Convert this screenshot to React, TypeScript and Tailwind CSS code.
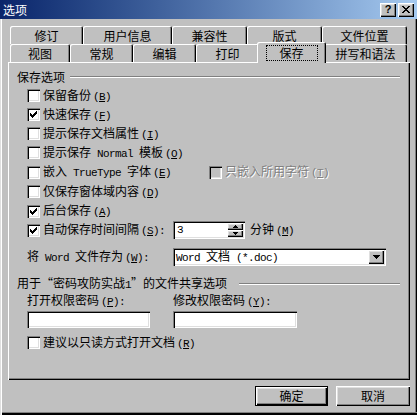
import React from 'react';

type Kids = { children?: React.ReactNode };

// Latin runs: narrow mono so they sit at SimSun's half-width
const L = ({ children }: Kids) => (
  <span className="font-['Liberation_Mono',monospace] text-[11px] tracking-[-0.6px] whitespace-pre">{children}</span>
);

const K = ({ k, colon }: { k: string; colon?: boolean }) => (
  <span className="ml-[2px]">
    <L>
      (<u>{k}</u>){colon ? ':' : ''}
    </L>
  </span>
);

const CheckMark = () => (
  <svg width="7" height="7" viewBox="0 0 7 7" shapeRendering="crispEdges">
    <rect x="6" y="0" width="1" height="1" fill="#000" />
    <rect x="5" y="1" width="2" height="1" fill="#000" />
    <rect x="0" y="2" width="1" height="1" fill="#000" />
    <rect x="4" y="2" width="3" height="1" fill="#000" />
    <rect x="0" y="3" width="2" height="1" fill="#000" />
    <rect x="3" y="3" width="3" height="1" fill="#000" />
    <rect x="0" y="4" width="5" height="1" fill="#000" />
    <rect x="1" y="5" width="3" height="1" fill="#000" />
    <rect x="2" y="6" width="1" height="1" fill="#000" />
  </svg>
);

const Box = ({ checked, disabled }: { checked?: boolean; disabled?: boolean }) => (
  <span
    className={`w-[13px] h-[13px] shrink-0 flex items-center justify-center shadow-[inset_1px_1px_#808080,inset_2px_2px_#000,inset_-1px_-1px_#fff,inset_-2px_-2px_#dfdfdf] ${
      disabled ? 'bg-[#c0c0c0]' : 'bg-white'
    }`}
  >
    {checked && <CheckMark />}
  </span>
);

const Check = ({ h, checked, children }: Kids & { h: string; checked?: boolean }) => (
  <div className={`flex items-center ${h}`}>
    <div className="flex items-center gap-[3px]">
      <Box checked={checked} />
      <span>{children}</span>
    </div>
  </div>
);

const Groove = ({ className }: { className: string }) => (
  <div className={`h-[2px] border-t border-t-[#808080] border-b border-b-white ${className}`} />
);

const raised = 'bg-[#c0c0c0] shadow-[inset_1px_1px_#fff,inset_-1px_-1px_#000,inset_-2px_-2px_#808080,inset_2px_2px_#dfdfdf]';
const sunken = 'bg-white shadow-[inset_1px_1px_#808080,inset_2px_2px_#000,inset_-1px_-1px_#fff,inset_-2px_-2px_#dfdfdf]';

const Tab = ({ label, w }: { label: string; w: string }) => (
  <div
    className={`${w} h-[18px] flex items-center justify-center pt-[1px] rounded-t-[2px] shadow-[inset_1px_1px_#fff,inset_-1px_0_#000,inset_-2px_0_#808080]`}
  >
    {label}
  </div>
);

const Tri = ({ up, w, h }: { up?: boolean; w: number; h: number }) => (
  <svg width={w} height={h} viewBox={`0 0 ${w} ${h}`} shapeRendering="crispEdges">
    <polygon points={up ? `${w / 2},0 ${w},${h} 0,${h}` : `0,0 ${w},0 ${w / 2},${h}`} fill="#000" />
  </svg>
);

export default function App() {
  return (
    <div className="w-[417px] h-[415px] bg-[#c0c0c0] flex flex-col font-['Noto_Sans_CJK_SC',sans-serif] text-[12px] leading-[14px] text-black overflow-hidden">
      {/* title bar */}
      <div className="h-[19px] shrink-0 flex items-center bg-linear-to-r from-[#0a246a] to-[#a6caf0] pl-[3px] pr-[3px]">
        <span className="flex-1 text-white">选项</span>
        <div className={`w-[16px] h-[14px] flex items-center justify-center ${raised}`}>
          <span className="font-['Liberation_Sans',sans-serif] font-bold text-[11px] leading-none">?</span>
        </div>
        <div className={`w-[16px] h-[14px] ml-[2px] flex items-center justify-center ${raised}`}>
          <svg width="8" height="7" viewBox="0 0 8 7" shapeRendering="crispEdges">
            <path d="M0 0h2l2 2.2L6 0h2L5 3.5 8 7H6L4 4.8 2 7H0l3-3.5z" fill="#000" />
          </svg>
        </div>
      </div>

      {/* window body */}
      <div className="flex-1 flex flex-col pt-[7px] shadow-[inset_1px_0_#dfdfdf,inset_2px_0_#fff,inset_0_-2px_#000,inset_0_-3px_#808080,inset_-1px_0_#000,inset_-2px_0_#808080]">
        {/* tabs */}
        <div className="flex h-[18px] ml-[10px]">
          <Tab label="修订" w="w-[73px]" />
          <Tab label="用户信息" w="w-[89px]" />
          <Tab label="兼容性" w="w-[75px]" />
          <Tab label="版式" w="w-[75px]" />
          <Tab label="文件位置" w="w-[85px]" />
        </div>
        <div className="flex h-[18px] ml-[10px]">
          <Tab label="视图" w="w-[60px]" />
          <Tab label="常规" w="w-[63px]" />
          <Tab label="编辑" w="w-[63px]" />
          <Tab label="打印" w="w-[63px]" />
          <div className="relative z-10 w-[69px] h-[21px] -mx-[2px] -mt-[2px] bg-[#c0c0c0] rounded-t-[2px] flex items-center justify-center shadow-[inset_1px_1px_#fff,inset_-1px_0_#000,inset_-2px_0_#808080]">
            <div className="w-[52px] h-[16px] border border-dotted border-black flex items-center justify-center">保存</div>
          </div>
          <Tab label="拼写和语法" w="w-[83px]" />
        </div>

        {/* panel */}
        <div className="ml-[8px] w-[402px] h-[318px] flex flex-col pl-[9px] pr-[10px] pt-[8px] shadow-[inset_1px_1px_#fff,inset_-1px_-1px_#000,inset_-2px_-2px_#808080]">
          <div className="flex items-center h-[14px]">
            <span>保存选项</span>
            <Groove className="flex-1 ml-[5px]" />
          </div>

          <div className="flex flex-col ml-[10px] mt-[2px]">
            <Check h="h-[19px]">
              保留备份<K k="B" />
            </Check>
            <Check h="h-[19px]" checked>
              快速保存<K k="F" />
            </Check>
            <Check h="h-[19px]">
              提示保存文档属性<K k="I" />
            </Check>
            <Check h="h-[19px]">
              提示保存<L>{' Normal '}</L>模板<K k="O" />
            </Check>
            <div className="flex items-center h-[20px]">
              <div className="w-[182px] flex items-center gap-[3px]">
                <Box />
                <span>
                  嵌入<L>{' TrueType '}</L>字体<K k="E" />
                </span>
              </div>
              <div className="flex items-center gap-[3px] text-[#808080] [text-shadow:1px_1px_#fff]">
                <Box disabled />
                <span>
                  只嵌入所用字符<K k="T" />
                </span>
              </div>
            </div>
            <Check h="h-[19px]">
              仅保存窗体域内容<K k="D" />
            </Check>
            <Check h="h-[20px]" checked>
              后台保存<K k="A" />
            </Check>
            <div className="flex items-center h-[18px]">
              <div className="w-[146px] flex items-center gap-[3px]">
                <Box checked />
                <span>
                  自动保存时间间隔<K k="S" colon />
                </span>
              </div>
              <div className={`w-[72px] h-[18px] flex items-center pl-[4px] pr-[2px] ${sunken}`}>
                <L>3</L>
                <div className="ml-auto flex flex-col w-[16px] h-[14px]">
                  <div className={`h-[7px] flex items-center justify-center ${raised}`}>
                    <Tri up w={5} h={3} />
                  </div>
                  <div className={`h-[7px] flex items-center justify-center ${raised}`}>
                    <Tri w={5} h={3} />
                  </div>
                </div>
              </div>
              <span className="ml-[5px]">
                分钟<K k="M" />
              </span>
            </div>

            <div className="flex items-center h-[18px] mt-[9px]">
              <span className="w-[146px]">
                将<L>{' Word '}</L>文件存为<K k="W" colon />
              </span>
              <div className={`w-[213px] h-[18px] flex items-center pl-[3px] pr-[2px] ${sunken}`}>
                <span>
                  <L>{'Word '}</L>文档<L>{' (*.doc)'}</L>
                </span>
                <div className={`ml-auto w-[16px] h-[14px] flex items-center justify-center ${raised}`}>
                  <Tri w={7} h={4} />
                </div>
              </div>
            </div>
          </div>

          <div className="flex items-center h-[14px] mt-[11px]">
            <span>
              用于“密码攻防实战<L>1</L>”的文件共享选项
            </span>
            <Groove className="flex-1 ml-[12px]" />
          </div>

          <div className="flex flex-col ml-[10px] mt-[3px]">
            <div className="flex items-center h-[14px]">
              <span className="w-[146px]">
                打开权限密码<K k="P" colon />
              </span>
              <span>
                修改权限密码<K k="Y" colon />
              </span>
            </div>
            <div className="flex h-[17px] mt-[3px]">
              <div className={`w-[123px] h-[17px] ${sunken}`} />
              <div className={`w-[124px] h-[17px] ml-[23px] ${sunken}`} />
            </div>
            <Check h="h-[19px] mt-[5px]">
              建议以只读方式打开文档<K k="R" />
            </Check>
          </div>
        </div>

        {/* buttons */}
        <div className="flex mt-[6px] ml-[255px] gap-[8px]">
          <div className="w-[73px] h-[20px] border border-black">
            <div className={`w-full h-full flex items-center justify-center ${raised}`}>确定</div>
          </div>
          <div className={`w-[74px] h-[20px] flex items-center justify-center ${raised}`}>取消</div>
        </div>
      </div>
    </div>
  );
}
